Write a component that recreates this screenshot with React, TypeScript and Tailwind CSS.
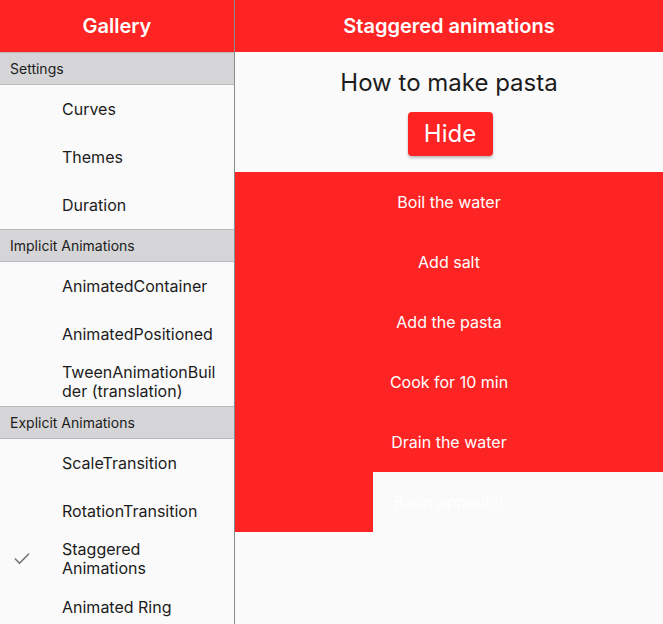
import { Check } from 'lucide-react';

const sections = [
  { title: 'Settings', items: ['Curves', 'Themes', 'Duration'] },
  {
    title: 'Implicit Animations',
    items: ['AnimatedContainer', 'AnimatedPositioned', 'TweenAnimationBuilder (translation)'],
  },
  {
    title: 'Explicit Animations',
    items: ['ScaleTransition', 'RotationTransition', 'Staggered Animations', 'Animated Ring'],
  },
];

const steps = ['Boil the water', 'Add salt', 'Add the pasta', 'Cook for 10 min', 'Drain the water'];

export default function App() {
  return (
    <div className="flex h-[624px] w-[663px] overflow-hidden bg-[#fafafa] font-['Inter',sans-serif]">
      {/* sidebar */}
      <div className="flex w-[235px] shrink-0 flex-col border-r border-[#8c8c8c]">
        <div className="flex h-[52px] shrink-0 items-center justify-center bg-[#fe2424] text-[20px] font-semibold text-white">
          Gallery
        </div>
        {sections.map((s) => (
          <div key={s.title}>
            <div className="flex h-[33px] items-center border-y border-[#b9b9bb] bg-[#d5d5d7] px-[10px] text-[14px] text-[#1c1c1c]">
              {s.title}
            </div>
            {s.items.map((item) => (
              <div key={item} className="flex h-[48px] items-center">
                <div className="flex w-[62px] shrink-0 items-center pl-[12px]">
                  {item === 'Staggered Animations' && (
                    <Check className="h-[20px] w-[20px] text-[#6e6e6e]" strokeWidth={1.75} />
                  )}
                </div>
                <div className="min-w-0 pr-[16px] text-[16px] leading-[19px] text-[#1c1c1c] [overflow-wrap:anywhere]">
                  {item}
                </div>
              </div>
            ))}
          </div>
        ))}
      </div>

      {/* main */}
      <div className="flex flex-1 flex-col">
        <div className="flex h-[52px] shrink-0 items-center justify-center bg-[#fe2424] text-[20px] font-semibold text-white">
          Staggered animations
        </div>
        <div className="flex h-[120px] flex-col items-center pt-[16px]">
          <div className="text-[24px] leading-[30px] text-[#1c1c1c]">How to make pasta</div>
          <button className="mt-[14px] ml-[2px] flex h-[44px] w-[85px] items-center justify-center rounded-[4px] bg-[#fe2424] text-[24px] text-white shadow-[0_2px_3px_rgba(0,0,0,0.25)]">
            Hide
          </button>
        </div>
        {steps.map((s) => (
          <div key={s} className="flex h-[60px] items-center justify-center bg-[#fe2424] text-[16px] text-white">
            {s}
          </div>
        ))}
        <div className="flex h-[60px] items-center justify-center bg-[linear-gradient(to_right,#fe2424_138px,transparent_138px)] text-[16px] text-white">
          Buon appetito!
        </div>
      </div>
    </div>
  );
}
